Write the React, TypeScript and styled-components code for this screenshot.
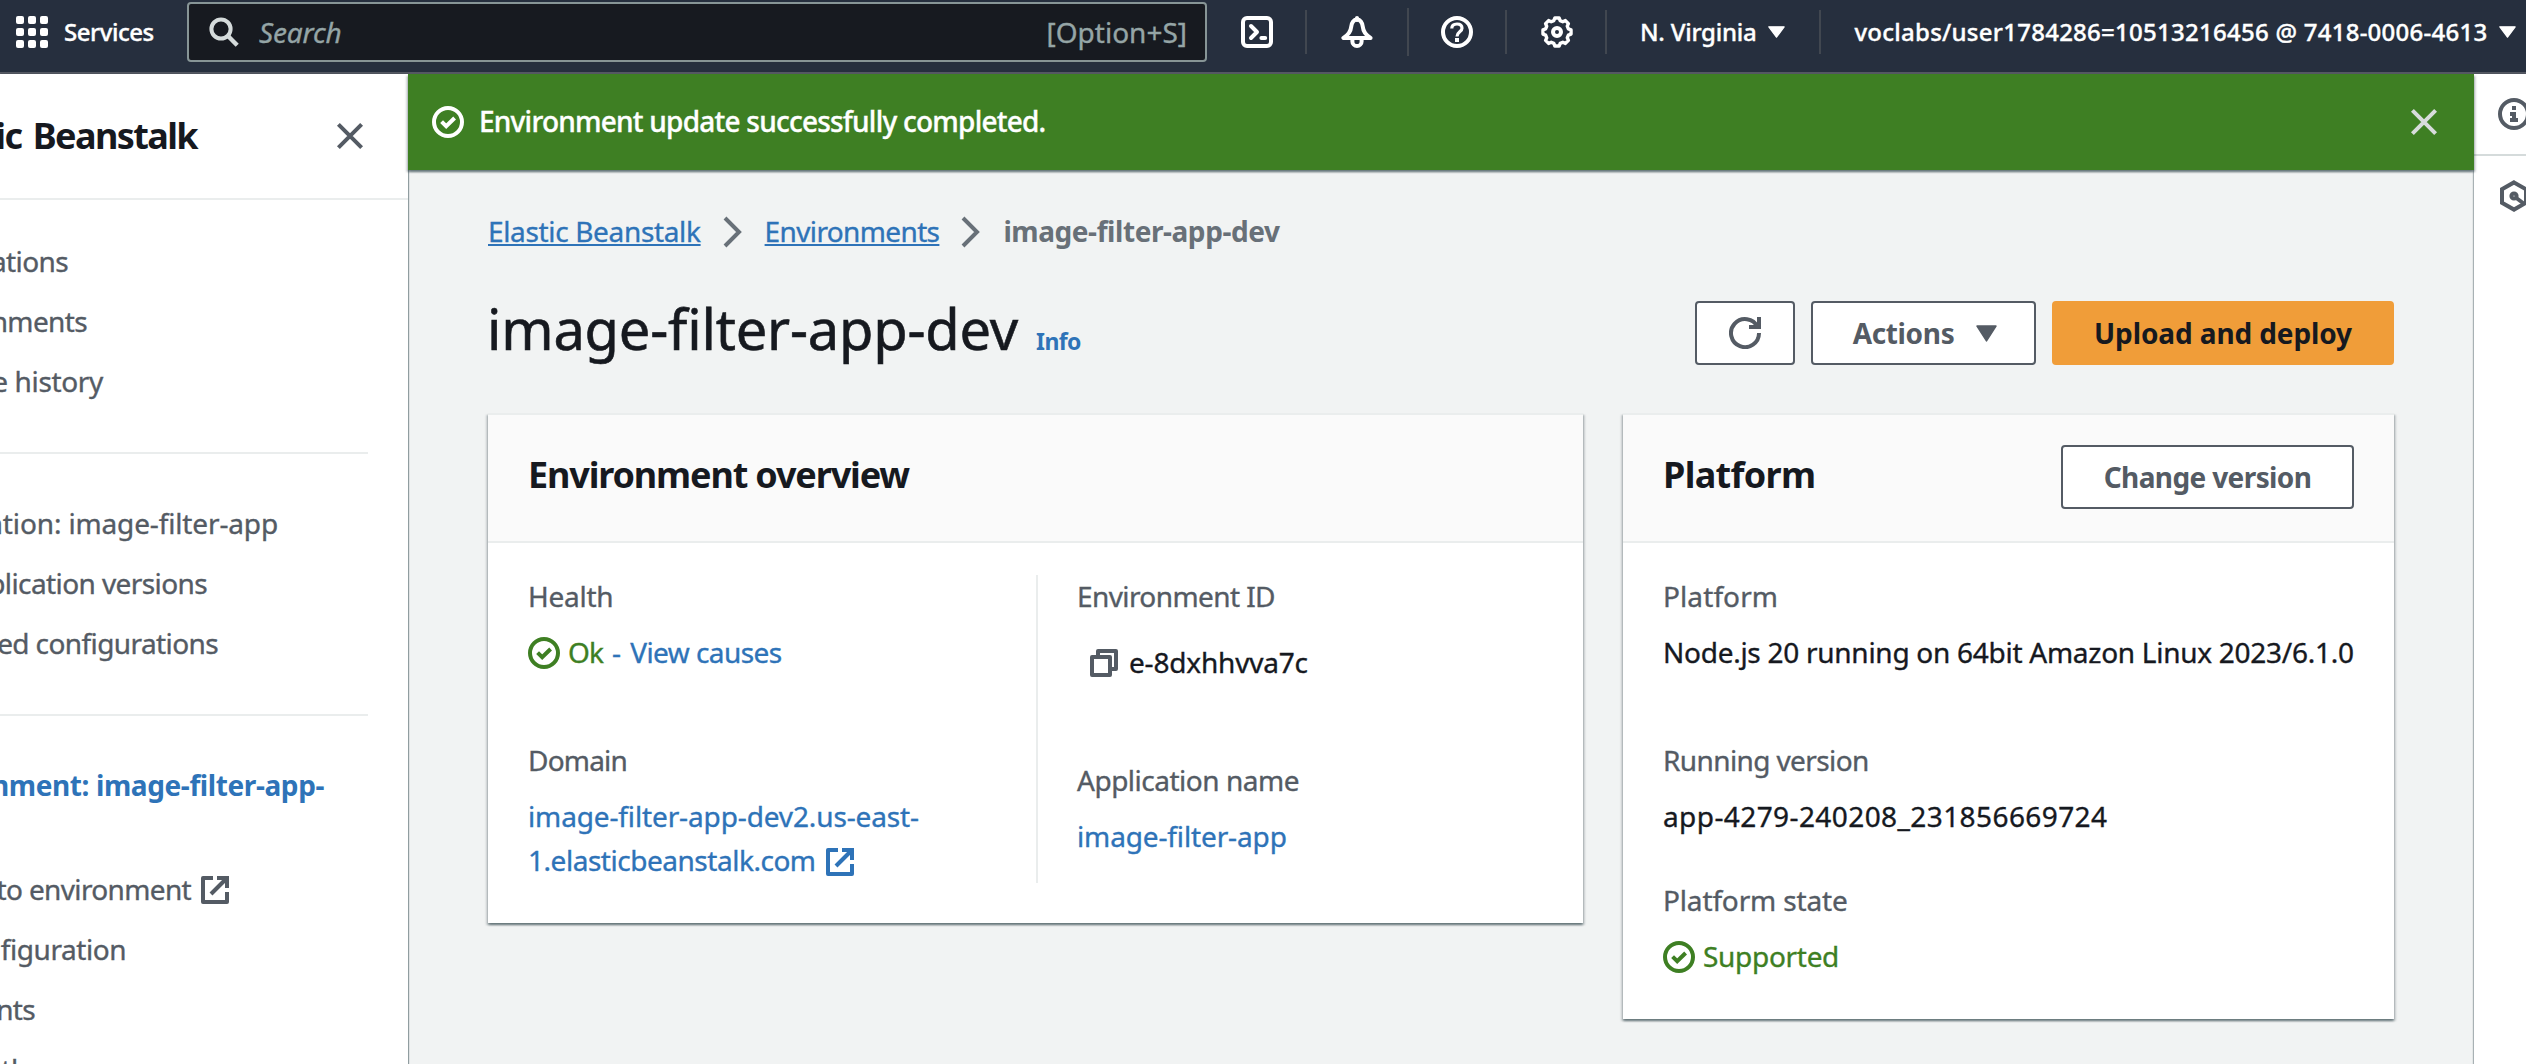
import React from "react";
import styled, { createGlobalStyle } from "styled-components";

const color = {
  ink: "#16191f",
  grey: "#545b64",
  greyLight: "#687078",
  link: "#2e73b8",
  green: "#3e7f23",
  orange: "#f09d39",
  nav: "#262f3e",
  page: "#f1f3f3",
  rule: "#eaeded",
};

const edgeShadow =
  "0 2px 2px 0 rgba(0,28,36,0.42), 2px 2px 2px 0 rgba(0,28,36,0.15), -2px 2px 2px 0 rgba(0,28,36,0.15)";

const GlobalStyle = createGlobalStyle`
  * { box-sizing: border-box; }
  html, body { margin: 0; padding: 0; }
  body {
    width: 2526px;
    height: 1064px;
    overflow: hidden;
    background: ${color.page};
    color: ${color.ink};
    font-family: "Noto Sans", "Open Sans", sans-serif;
    font-size: 28px;
    line-height: 44px;
    -webkit-text-stroke-width: 0.35px;
  }
  a { color: ${color.link}; text-decoration: none; }
  h1, h2 { margin: 0; font-weight: 700; }
  h2, b, button { -webkit-text-stroke-width: 0; }
`;

/* ---------- text ---------- */

const Text = styled.span<{ $ls?: number; $ml?: number }>`
  letter-spacing: ${(p) => p.$ls ?? 0}px;
  margin-left: ${(p) => p.$ml ?? 0}px;
  white-space: pre;
`;

const Line = styled.div<{ $ls?: number; $tone?: string }>`
  height: 44px;
  margin: -1px 0 1px;
  display: flex;
  align-items: center;
  white-space: pre;
  letter-spacing: ${(p) => p.$ls ?? 0}px;
  color: ${(p) => p.$tone ?? color.ink};
`;

/* ---------- icons ---------- */

const Glyph = styled.svg<{ $tone?: string }>`
  width: 32px;
  height: 32px;
  flex: none;
  display: block;
  fill: none;
  stroke: ${(p) => p.$tone ?? "currentColor"};
  stroke-width: 2;
`;

type IconProps = { tone?: string };

const CheckCircle = ({ tone }: IconProps) => (
  <Glyph viewBox="0 0 16 16" $tone={tone}>
    <circle cx="8" cy="8" r="7" />
    <path d="M4.8 7.8l2.3 2.3 4.2-4.1" />
  </Glyph>
);

const Cross = ({ tone }: IconProps) => (
  <Glyph viewBox="0 0 16 16" $tone={tone}>
    <path d="M2.2 2.2l11.6 11.6M13.8 2.2L2.2 13.8" />
  </Glyph>
);

const External = () => (
  <Glyph viewBox="0 0 16 16" strokeLinejoin="round">
    <path d="M7 2H2v12h12V9" />
    <path d="M9 2h5v5" strokeLinejoin="miter" />
    <path d="M6 10l8-8" />
  </Glyph>
);

const Chevron = () => (
  <Glyph viewBox="0 0 16 16" $tone={color.greyLight}>
    <path d="M4 1l7 7-7 7" />
  </Glyph>
);

const Refresh = () => (
  <Glyph viewBox="0 0 16 16">
    <path d="M10 5h5V0" />
    <path d="M15 8a7 7 0 1 1-.7-3" />
  </Glyph>
);

const Copy = () => (
  <Glyph viewBox="0 0 16 16" $tone={color.grey} strokeLinejoin="round">
    <path d="M2 5h9v9H2z" />
    <path d="M5 5V2h9v9h-3" />
  </Glyph>
);

const Terminal = () => (
  <Glyph viewBox="0 0 16 16" strokeLinejoin="round" strokeLinecap="round">
    <rect x="1" y="1" width="14" height="14" rx="2" />
    <path d="M5 5l3 3-3 3M10.2 11h1.9" />
  </Glyph>
);

const Bell = () => (
  <Glyph viewBox="0 0 16 16" strokeLinejoin="round">
    <path d="M8 1.6C5.8 2 5.3 3.6 5.1 5.4 4.9 7.6 4.2 9.2 1.2 11h13.6c-3-1.8-3.7-3.4-3.9-5.6C10.7 3.6 10.2 2 8 1.6z" />
    <path d="M8 2V1" strokeLinecap="round" />
    <path d="M5.7 11.5v1.2a2.3 2.3 0 0 0 4.6 0v-1.2" />
  </Glyph>
);

const Help = () => (
  <Glyph viewBox="0 0 16 16">
    <circle cx="8" cy="8" r="7" />
    <path d="M5.4 6.2C5.4 4.7 6.5 4 8 4s2.5.8 2.5 2.1C10.5 8 8 7.9 8 10.3" strokeWidth="1.6" />
    <path d="M7 12h2" />
  </Glyph>
);

const gearPath = (() => {
  const pts: string[] = [];
  for (let i = 0; i < 8; i++) {
    const a = (i * Math.PI) / 4 - Math.PI / 2;
    const at = (r: number, d: number) =>
      `${(8 + r * Math.cos(a + d)).toFixed(2)} ${(8 + r * Math.sin(a + d)).toFixed(2)}`;
    pts.push(at(7.1, -0.15), at(7.1, 0.15), at(5.9, 0.27), at(5.9, 0.51));
  }
  return `M${pts.join("L")}Z`;
})();

const Gear = () => (
  <Glyph viewBox="0 0 16 16" strokeLinejoin="round">
    <path d={gearPath} strokeWidth="1.7" />
    <circle cx="8" cy="8" r="2" />
  </Glyph>
);

const InfoCircle = () => (
  <Glyph viewBox="0 0 16 16">
    <circle cx="8" cy="8" r="7" />
    <path d="M7 5h2M6 8h3M8 7v4M6 11h4" />
  </Glyph>
);

const Hexagon = () => (
  <Glyph viewBox="0 0 16 16">
    <path d="M8 1.2l6 3.4v6.8l-6 3.4-6-3.4V4.6z" />
    <circle cx="8" cy="8" r="1.3" />
    <path d="M8.5 8.5l4 3" />
  </Glyph>
);

const Caret = styled.svg<{ $w: number; $h: number }>`
  width: ${(p) => p.$w}px;
  height: ${(p) => p.$h}px;
  flex: none;
  display: block;
  fill: currentColor;
  stroke: currentColor;
  stroke-width: 1.2;
  stroke-linejoin: round;
`;

const DownCaret = ({ w, h }: { w: number; h: number }) => (
  <Caret $w={w} $h={h} viewBox="0 0 16 12" preserveAspectRatio="none">
    <path d="M.8.8h14.4L8 11.2z" />
  </Caret>
);

/* ---------- top navigation ---------- */

const TopNav = styled.header`
  height: 74px;
  padding-bottom: 8px;
  display: flex;
  align-items: center;
  background: ${color.nav};
  border-bottom: 2px solid #545862;
  color: #fff;
  font-size: 24px;
  font-weight: 500;
`;

const Services = styled.div`
  width: 187px;
  padding-left: 16px;
  display: flex;
  align-items: center;
  gap: 16px;
`;

const AppGrid = styled.div`
  width: 32px;
  display: grid;
  grid-template-columns: repeat(3, 8px);
  gap: 4px;
`;

const AppDot = styled.i`
  height: 8px;
  border-radius: 2px;
  background: #fff;
`;

const SearchBox = styled.div`
  width: 1020px;
  height: 60px;
  padding: 0 18px 0 19px;
  display: flex;
  align-items: center;
  background: #171a20;
  border: 2px solid #879596;
  border-radius: 4px;
  color: #95a5a6;
  font-size: 28px;
  font-weight: 400;
`;

const SearchLabel = styled.span`
  flex: 1;
  margin-left: 19px;
  font-style: italic;
  letter-spacing: -0.14px;
`;

const NavCell = styled.div<{ $l: number; $r: number; $line?: number }>`
  display: flex;
  align-items: center;
  padding: 0 ${(p) => p.$r}px 0 ${(p) => p.$l}px;
  height: ${(p) => p.$line ?? 44}px;
  border-right: ${(p) => (p.$line ? "2px solid #414750" : "none")};
`;

const NavText = styled.span<{ $ls: number; $gap: number }>`
  white-space: pre;
  letter-spacing: ${(p) => p.$ls}px;
  margin-right: ${(p) => p.$gap}px;
`;

/* ---------- frame ---------- */

const Frame = styled.div`
  height: 990px;
  display: grid;
  grid-template-columns: 408px 2066px 52px;
`;

const Sidebar = styled.nav`
  background: #fff;
  box-shadow: 1px 0 1px 0 rgba(0, 28, 36, 0.4);
  color: ${color.grey};
`;

const SideHeader = styled.div`
  height: 126px;
  padding-right: 42px;
  display: flex;
  align-items: center;
  justify-content: space-between;
  border-bottom: 2px solid ${color.rule};
`;

const SideTitle = styled.h2`
  width: 197px;
  margin-bottom: 1px;
  display: flex;
  justify-content: flex-end;
  white-space: pre;
  font-size: 36px;
  color: ${color.ink};
  letter-spacing: -1.6px;
  word-spacing: 3.5px;
`;

const SideBody = styled.div`
  padding-top: 40px;
`;

const SideGroup = styled.div`
  width: 368px;
  display: flex;
  flex-direction: column;
  gap: 16px;
  padding-bottom: 48px;
  margin-bottom: 48px;
  border-bottom: 2px solid ${color.rule};

  &:last-child {
    border: 0;
    margin: 0;
    padding: 0;
  }
`;

const SideItem = styled.a<{ $end: number; $ls: number; $active?: boolean }>`
  width: ${(p) => p.$end}px;
  height: ${(p) => (p.$active ? 88 : 44)}px;
  margin: -1px 0 1px;
  display: flex;
  justify-content: flex-end;
  white-space: pre;
  color: ${(p) => (p.$active ? color.link : color.grey)};
  font-weight: ${(p) => (p.$active ? 700 : 400)};
  -webkit-text-stroke-width: ${(p) => (p.$active ? 0 : 0.35)}px;
  letter-spacing: ${(p) => p.$ls}px;

  svg {
    margin: 7px 0 0 8px;
  }
`;

const Main = styled.main`
  min-width: 0;
`;

const Flash = styled.div`
  height: 96px;
  padding: 0 34px 0 24px;
  display: flex;
  align-items: center;
  position: relative;
  z-index: 1;
  background: ${color.green};
  box-shadow: ${edgeShadow};
  color: #fff;
`;

const FlashText = styled.span`
  flex: 1;
  margin: 0 0 2px 15px;
  font-weight: 500;
  letter-spacing: -0.77px;
`;

const Content = styled.div`
  padding: 40px 80px 0;
`;

const Breadcrumbs = styled.div`
  height: 44px;
  margin: -1px 0 1px;
  display: flex;
  align-items: center;
  gap: 16px;

  a {
    text-decoration: underline;
    text-decoration-thickness: 2px;
    text-underline-offset: 2px;
    text-decoration-skip-ink: none;
  }
  svg {
    margin-top: 2px;
  }
`;

const Current = styled.b`
  color: ${color.greyLight};
  letter-spacing: -0.43px;
`;

const TitleRow = styled.div`
  height: 64px;
  margin: 48px 0;
  display: flex;
  justify-content: space-between;
`;

const Title = styled.h1`
  margin: -5px 0 0 -1px;
  font-size: 56px;
  line-height: 64px;
  font-weight: 400;
  letter-spacing: -0.2px;
  -webkit-text-stroke-width: 0.6px;
`;

const InfoLink = styled.a`
  margin-left: 18px;
  font-size: 23px;
  font-weight: 700;
  letter-spacing: -0.6px;
  -webkit-text-stroke-width: 0;
`;

const ButtonBar = styled.div`
  display: flex;
  gap: 16px;
`;

const Button = styled.button<{ $w: number; $ls?: number; $primary?: boolean }>`
  width: ${(p) => p.$w}px;
  height: 64px;
  padding: 0;
  display: flex;
  align-items: center;
  justify-content: center;
  gap: 22px;
  white-space: pre;
  font-family: inherit;
  font-size: 28px;
  font-weight: 700;
  letter-spacing: ${(p) => p.$ls ?? 0}px;
  border-radius: 4px;
  border: 2px solid ${(p) => (p.$primary ? color.orange : color.grey)};
  background: ${(p) => (p.$primary ? color.orange : "#fff")};
  color: ${(p) => (p.$primary ? color.ink : color.grey)};
`;

const MenuButton = styled(Button)`
  padding-left: 3px;
`;

const Cards = styled.div`
  display: grid;
  grid-template-columns: 1095px 771px;
  gap: 40px;
  align-items: start;
`;

const Card = styled.section`
  background: #fff;
  border-top: 2px solid ${color.rule};
  box-shadow: ${edgeShadow};
`;

const CardHeader = styled.div`
  height: 128px;
  padding: 0 40px 2px;
  display: flex;
  align-items: center;
  justify-content: space-between;
  background: #fafafa;
  border-bottom: 2px solid ${color.rule};
`;

const CardTitle = styled.h2<{ $ls: number }>`
  margin: 0 0 4px;
  font-size: 36px;
  letter-spacing: ${(p) => p.$ls}px;
`;

const CardBody = styled.div<{ $cols?: boolean }>`
  padding: 32px 40px 40px;
  display: ${(p) => (p.$cols ? "grid" : "block")};
  grid-template-columns: 510px 1fr;
`;

const Column = styled.div<{ $ruled?: boolean }>`
  padding-left: ${(p) => (p.$ruled ? 0 : 39)}px;
  border-right: ${(p) => (p.$ruled ? `2px solid ${color.rule}` : "none")};
`;

const Field = styled.div<{ $after?: number }>`
  display: flex;
  flex-direction: column;
  gap: 12px;
  margin-bottom: ${(p) => p.$after ?? 0}px;
`;

const Status = styled.div`
  height: 44px;
  display: flex;
  align-items: center;
  color: ${color.green};

  > svg {
    margin-right: 8px;
  }
  > span,
  > a {
    margin-bottom: 2px;
  }
`;

const CopyRow = styled.div`
  height: 64px;
  padding-left: 11px;
  display: flex;
  align-items: center;
  gap: 9px;

  > span {
    margin-bottom: 2px;
  }
`;

const LinkLine = styled(Line)`
  color: ${color.link};

  svg {
    margin: 3px 0 0 8px;
  }
`;

const ToolsRail = styled.aside`
  background: #fff;
  color: ${color.grey};
  box-shadow: -1px 0 1px 0 rgba(0, 28, 36, 0.3);
`;

const RailCell = styled.div<{ $h: number }>`
  height: ${(p) => p.$h}px;
  padding: 24px 0 0 24px;
  overflow: hidden;
  border-bottom: 2px solid #d5dbdb;

  &:last-child {
    border: 0;
  }
`;

/* ---------- data ---------- */

type NavEntry = { label: string; end: number; ls: number; active?: boolean; external?: boolean };

const sideGroups: NavEntry[][] = [
  [
    { label: "Applications", end: 68, ls: -0.6 },
    { label: "Environments", end: 87, ls: -0.63 },
    { label: "Change history", end: 103, ls: -0.34 },
  ],
  [
    { label: "Application: image-filter-app", end: 278, ls: -0.14 },
    { label: "Application versions", end: 207, ls: -0.6 },
    { label: "Saved configurations", end: 218, ls: -0.6 },
  ],
  [
    { label: "Environment: image-filter-app-", end: 324, ls: -0.4, active: true },
    { label: "Go to environment", end: 231, ls: -0.65, external: true },
    { label: "Configuration", end: 126, ls: -0.45 },
    { label: "Events", end: 35, ls: -0.7 },
    { label: "Health", end: 28, ls: -0.3 },
  ],
];

export default function App() {
  return (
    <>
      <GlobalStyle />
      <TopNav>
        <Services>
          <AppGrid>
            {Array.from({ length: 9 }, (_, i) => (
              <AppDot key={i} />
            ))}
          </AppGrid>
          <Text $ls={-0.47}>Services</Text>
        </Services>
        <SearchBox>
          <Glyph viewBox="0 0 16 16" $tone="#d5dbdb">
            <circle cx="6.5" cy="6.5" r="4.8" />
            <path d="M10 10l4.6 4.6" strokeWidth="2.2" />
          </Glyph>
          <SearchLabel>Search</SearchLabel>
          <Text $ls={0}>[Option+S]</Text>
        </SearchBox>
        <NavCell $l={34} $r={32} $line={44}>
          <Terminal />
        </NavCell>
        <NavCell $l={34} $r={34} $line={48}>
          <Bell />
        </NavCell>
        <NavCell $l={32} $r={32} $line={44}>
          <Help />
        </NavCell>
        <NavCell $l={34} $r={32} $line={44}>
          <Gear />
        </NavCell>
        <NavCell $l={33} $r={34} $line={44}>
          <NavText $ls={-0.25} $gap={12}>
            N. Virginia
          </NavText>
          <DownCaret w={17} h={12} />
        </NavCell>
        <NavCell $l={33} $r={0}>
          <NavText $ls={0.255} $gap={12}>
            voclabs/user1784286=10513216456 @ 7418-0006-4613
          </NavText>
          <DownCaret w={17} h={12} />
        </NavCell>
      </TopNav>
      <Frame>
        <Sidebar>
          <SideHeader>
            <SideTitle>Elastic Beanstalk</SideTitle>
            <Cross tone={color.grey} />
          </SideHeader>
          <SideBody>
            {sideGroups.map((group, i) => (
              <SideGroup key={i}>
                {group.map((item) => (
                  <SideItem key={item.label} $end={item.end} $ls={item.ls} $active={item.active}>
                    {item.label}
                    {item.external && <External />}
                  </SideItem>
                ))}
              </SideGroup>
            ))}
          </SideBody>
        </Sidebar>
        <Main>
          <Flash>
            <CheckCircle />
            <FlashText>Environment update successfully completed.</FlashText>
            <Cross tone="#d8dcdc" />
          </Flash>
          <Content>
            <Breadcrumbs>
              <a>
                <Text $ls={-0.34}>Elastic Beanstalk</Text>
              </a>
              <Chevron />
              <a>
                <Text $ls={-0.63}>Environments</Text>
              </a>
              <Chevron />
              <Current>image-filter-app-dev</Current>
            </Breadcrumbs>
            <TitleRow>
              <Title>
                image-filter-app-dev<InfoLink>Info</InfoLink>
              </Title>
              <ButtonBar>
                <Button $w={100}>
                  <Refresh />
                </Button>
                <MenuButton $w={225} $ls={-0.34}>
                  Actions
                  <DownCaret w={21} h={17} />
                </MenuButton>
                <Button $w={342} $ls={-0.11} $primary>
                  Upload and deploy
                </Button>
              </ButtonBar>
            </TitleRow>
            <Cards>
              <Card>
                <CardHeader>
                  <CardTitle $ls={-1.15}>Environment overview</CardTitle>
                </CardHeader>
                <CardBody $cols>
                  <Column $ruled>
                    <Field $after={64}>
                      <Line $ls={-0.26} $tone={color.grey}>
                        Health
                      </Line>
                      <Status>
                        <CheckCircle />
                        <Text $ls={-0.87}>Ok</Text>
                        <a>
                          <Text $ml={9}>-</Text>
                          <Text $ls={-0.55} $ml={9}>
                            View causes
                          </Text>
                        </a>
                      </Status>
                    </Field>
                    <Field>
                      <Line $ls={-0.8} $tone={color.grey}>
                        Domain
                      </Line>
                      <div>
                        <LinkLine $ls={-0.13}>image-filter-app-dev2.us-east-</LinkLine>
                        <LinkLine $ls={-0.47}>
                          1.elasticbeanstalk.com
                          <External />
                        </LinkLine>
                      </div>
                    </Field>
                  </Column>
                  <Column>
                    <Field $after={64}>
                      <Line $ls={-0.59} $tone={color.grey}>
                        Environment ID
                      </Line>
                      <CopyRow>
                        <Copy />
                        <Text $ls={-0.19}>e-8dxhhvva7c</Text>
                      </CopyRow>
                    </Field>
                    <Field>
                      <Line $ls={-0.49} $tone={color.grey}>
                        Application name
                      </Line>
                      <LinkLine $ls={-0.13}>image-filter-app</LinkLine>
                    </Field>
                  </Column>
                </CardBody>
              </Card>
              <Card>
                <CardHeader>
                  <CardTitle $ls={-0.7}>Platform</CardTitle>
                  <Button $w={293} $ls={-0.61}>
                    Change version
                  </Button>
                </CardHeader>
                <CardBody>
                  <Field $after={64}>
                    <Line $ls={0.1} $tone={color.grey}>
                      Platform
                    </Line>
                    <Line $ls={-0.27}>Node.js 20 running on 64bit Amazon Linux 2023/6.1.0</Line>
                  </Field>
                  <Field $after={40}>
                    <Line $ls={-0.61} $tone={color.grey}>
                      Running version
                    </Line>
                    <Line $ls={0.41}>app-4279-240208_231856669724</Line>
                  </Field>
                  <Field>
                    <Line $ls={-0.15} $tone={color.grey}>
                      Platform state
                    </Line>
                    <Status>
                      <CheckCircle />
                      <Text $ls={-0.3}>Supported</Text>
                    </Status>
                  </Field>
                </CardBody>
              </Card>
            </Cards>
          </Content>
        </Main>
        <ToolsRail>
          <RailCell $h={82}>
            <InfoCircle />
          </RailCell>
          <RailCell $h={82}>
            <Hexagon />
          </RailCell>
        </ToolsRail>
      </Frame>
    </>
  );
}
